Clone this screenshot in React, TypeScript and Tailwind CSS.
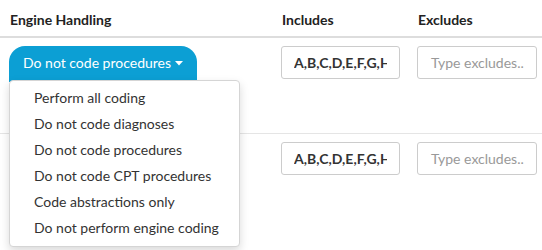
import React from 'react';

const options = [
  'Perform all coding',
  'Do not code diagnoses',
  'Do not code procedures',
  'Do not code CPT procedures',
  'Code abstractions only',
  'Do not perform engine coding',
];

function Caret() {
  return (
    <svg className="ml-1 mt-0.5" width="8" height="5" viewBox="0 0 8 5">
      <path d="M0 0h8L4 4.5z" fill="currentColor" />
    </svg>
  );
}

function Row({ open, border }: { open: boolean; border: string }) {
  return (
    <div className={`grid grid-cols-[272px_136px_134px] h-[96px] ${border}`}>
      <div className="pl-[9px] pt-[8px]">
        <button
          className={`h-[36px] pl-[14px] pr-[14px] pb-[4px] bg-[#0c9fd4] text-white text-[14px] flex items-center ${
            open ? 'rounded-t-[16px]' : 'rounded-[17px]'
          }`}
        >
          Do not code procedures
          <Caret />
        </button>
      </div>
      <div className="pl-[9px] pt-[8px]">
        <div className="w-[119px] h-[33px] border border-[#ccc] rounded-[3px] flex items-center px-[12px]">
          <span className="block overflow-hidden whitespace-nowrap font-bold text-[14px] text-[#333]">A,B,C,D,E,F,G,H</span>
        </div>
      </div>
      <div className="pl-[9px] pt-[8px]">
        <div className="w-[120px] h-[33px] border border-[#ccc] rounded-[3px] flex items-center px-[13px] overflow-hidden whitespace-nowrap text-[14px] text-[#999]">
          Type excludes..
        </div>
      </div>
    </div>
  );
}

export default function App() {
  return (
    <div className="relative w-[542px] h-[250px] bg-white overflow-hidden" style={{ fontFamily: 'Lato, sans-serif' }}>
      <div className="grid grid-cols-[272px_136px_134px] h-[38px] border-b-2 border-[#ddd] font-bold text-[14px] text-[#222]">
        <div className="pl-[10px] pt-[9px]">Engine Handling</div>
        <div className="pl-[10px] pt-[9px]">Includes</div>
        <div className="pl-[10px] pt-[9px]">Excludes</div>
      </div>
      <Row open border="border-b border-[#e5e5e5]" />
      <Row open={false} border="" />

      <ul className="absolute left-[9px] top-[80px] w-[231px] pt-[3px] pb-[6px] bg-white border border-[#d5d5d5] rounded-[4px] shadow-[0_4px_10px_rgba(0,0,0,0.15)] text-[14px] text-[#333]">
        {options.map((o) => (
          <li key={o} className="h-[26px] pl-[24px] flex items-center whitespace-nowrap">
            {o}
          </li>
        ))}
      </ul>
    </div>
  );
}
